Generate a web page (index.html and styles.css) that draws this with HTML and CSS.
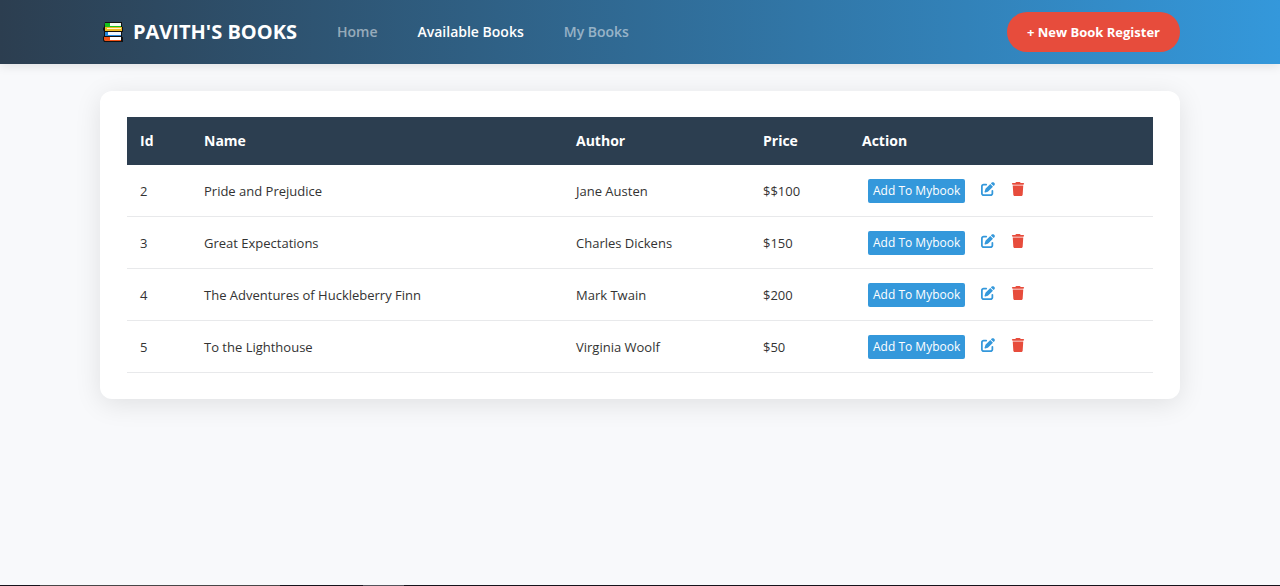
FILE: index.html
```html
<!DOCTYPE html>
<html lang="en">
<head>
<meta charset="utf-8">
<meta name="viewport" content="width=device-width, initial-scale=1">
<title>Pavith's Books</title>
<link rel="stylesheet" href="styles.css">
</head>
<body>
<svg class="sprite" aria-hidden="true">
  <symbol id="edit" viewBox="0 0 512 512"><path d="M471.600 21.700c-21.900-21.900-57.300-21.900-79.200 0L362.300 51.700l97.900 97.900 30.100-30.100c21.900-21.900 21.900-57.300 0-79.200L471.600 21.700zm-299.200 220c-6.100 6.100-10.800 13.600-13.500 21.900l-29.600 88.800c-2.900 8.600-.6 18.100 5.800 24.600s15.900 8.700 24.600 5.800l88.800-29.600c8.200-2.700 15.700-7.400 21.900-13.500L437.700 172.300 339.700 74.300 172.400 241.700zM96 64C43 64 0 107 0 160V416c0 53 43 96 96 96H352c53 0 96-43 96-96V320c0-17.700-14.300-32-32-32s-32 14.300-32 32v96c0 17.700-14.300 32-32 32H96c-17.700 0-32-14.300-32-32V160c0-17.700 14.300-32 32-32h96c17.700 0 32-14.300 32-32s-14.300-32-32-32H96z"/></symbol>
  <symbol id="trash" viewBox="0 0 448 512"><path d="M135.200 17.700L128 32H32C14.300 32 0 46.300 0 64S14.300 96 32 96H416c17.700 0 32-14.300 32-32s-14.300-32-32-32H320l-7.200-14.300C307.400 6.800 296.300 0 284.200 0H163.800c-12.100 0-23.200 6.800-28.600 17.700zM416 128H32L53.200 467c1.600 25.300 22.600 45 47.900 45H346.900c25.300 0 46.300-19.700 47.900-45L416 128z"/></symbol>
</svg>
<header class="topbar">
  <div class="container topbar-inner">
    <a class="brand" href="#">
      <svg class="brand-icon" viewBox="0 0 20 20" aria-hidden="true">
        <path fill="#111" d="M2 0h17v5h1v5h-1v5h1v5H1l-1-2v-3l1-1V9l-1-1V6l1-1z"/>
        <path fill="#15c21c" d="M2 1h16v4H2z"/>
        <path fill="#f5fbf2" d="M7 1h11v3H7z"/>
        <path fill="#edb923" d="M2 5h17v4H2z"/><path fill="#fff3d0" d="M4 6h14v1H4z"/>
        <path fill="#2488dc" d="M2 10h16v4H2z"/><path fill="#f0f7ff" d="M5 10h13v3H5z"/>
        <path fill="#ef5217" d="M1 15h17v4H2l-1-1z"/><path fill="#fff" d="M7 15h11v3H7z"/>
      </svg>
      <span>PAVITH'S BOOKS</span>
    </a>
    <nav class="nav">
      <a class="nav-link" href="#">Home</a>
      <a class="nav-link active" href="#" aria-current="page">Available Books</a>
      <a class="nav-link" href="#">My Books</a>
    </nav>
    <a class="register" href="#">+ New Book Register</a>
  </div>
</header>
<main class="container main">
  <section class="card">
    <table class="books">
      <colgroup><col class="col-id"><col class="col-name"><col class="col-author"><col class="col-price"><col></colgroup>
      <thead><tr><th>Id</th><th>Name</th><th>Author</th><th>Price</th><th>Action</th></tr></thead>
      <tbody>
        <tr><td>2</td><td>Pride and Prejudice</td><td>Jane Austen</td><td>$$100</td><td><div class="actions"><button class="add" type="button">Add To Mybook</button><a class="icon-link edit" href="#" aria-label="Edit"><svg class="icon"><use href="#edit"/></svg></a><a class="icon-link trash" href="#" aria-label="Delete"><svg class="icon"><use href="#trash"/></svg></a></div></td></tr>
        <tr><td>3</td><td>Great Expectations</td><td>Charles Dickens</td><td>$150</td><td><div class="actions"><button class="add" type="button">Add To Mybook</button><a class="icon-link edit" href="#" aria-label="Edit"><svg class="icon"><use href="#edit"/></svg></a><a class="icon-link trash" href="#" aria-label="Delete"><svg class="icon"><use href="#trash"/></svg></a></div></td></tr>
        <tr><td>4</td><td>The Adventures of Huckleberry Finn</td><td>Mark Twain</td><td>$200</td><td><div class="actions"><button class="add" type="button">Add To Mybook</button><a class="icon-link edit" href="#" aria-label="Edit"><svg class="icon"><use href="#edit"/></svg></a><a class="icon-link trash" href="#" aria-label="Delete"><svg class="icon"><use href="#trash"/></svg></a></div></td></tr>
        <tr><td>5</td><td>To the Lighthouse</td><td>Virginia Woolf</td><td>$50</td><td><div class="actions"><button class="add" type="button">Add To Mybook</button><a class="icon-link edit" href="#" aria-label="Edit"><svg class="icon"><use href="#edit"/></svg></a><a class="icon-link trash" href="#" aria-label="Delete"><svg class="icon"><use href="#trash"/></svg></a></div></td></tr>
      </tbody>
    </table>
  </section>
</main>
<div class="bottom-edge"></div>
</body>
</html>
```

FILE: styles.css
```css
* { box-sizing: border-box; }

body {
  margin: 0;
  min-height: 100vh;
  display: flex;
  flex-direction: column;
  background: #f8f9fb;
  color: #333;
  font-family: "Segoe UI", "Open Sans", "Noto Sans", sans-serif;
  font-size: 13px;
  line-height: 20px;
}

a { text-decoration: none; }

.sprite { display: none; }

.container {
  width: 100%;
  max-width: 1128px;
  margin: 0 auto;
  padding: 0 24px;
}

.topbar {
  background: linear-gradient(90deg, #2c3e50, #3498db);
  box-shadow: 0 2px 10px rgba(0, 0, 0, 0.1);
}

.topbar-inner {
  display: flex;
  align-items: center;
  min-height: 64px;
}

.brand {
  display: flex;
  align-items: center;
  gap: 10px;
  margin: 0 40px 0 3px;
  color: #fff;
  font-size: 20px;
  font-weight: 700;
  white-space: nowrap;
}

.brand-icon {
  width: 20px;
  height: 20px;
}

.nav {
  display: flex;
  gap: 40px;
  font-size: 14px;
  font-weight: 600;
  white-space: nowrap;
}

.nav-link { color: rgba(255, 255, 255, 0.5); }
.nav-link.active { color: #fff; }

.register {
  margin-left: auto;
  padding: 10px 20px;
  border-radius: 20px;
  background: #e74c3c;
  color: #fff;
  font-size: 13px;
  font-weight: 700;
  white-space: nowrap;
}

.main {
  flex: 1;
  padding-top: 27px;
  padding-bottom: 27px;
}

.card {
  padding: 26px 27px;
  border-radius: 12px;
  background: #fff;
  box-shadow: 0 5px 27px rgba(0, 0, 0, 0.1);
}

.books {
  width: 100%;
  border-collapse: separate;
  border-spacing: 0;
  table-layout: fixed;
}

.col-id { width: 64px; }
.col-name { width: 372px; }
.col-author { width: 187px; }
.col-price { width: 99px; }

.books th {
  padding: 14px 13px;
  background: #2c3e50;
  color: #fff;
  font-size: 14px;
  font-weight: 700;
  text-align: left;
}

.books td {
  height: 52px;
  padding: 0 13px;
  border-bottom: 1px solid #e8e9eb;
}

.actions {
  display: flex;
  align-items: center;
  padding-left: 6px;
}

.add {
  padding: 2px 5px;
  border: 0;
  border-radius: 2px;
  background: #3498db;
  color: #fff;
  font: inherit;
  font-size: 12px;
  white-space: nowrap;
}

.icon-link {
  display: flex;
  margin-left: 16px;
  padding-bottom: 3px;
}

.icon {
  width: 14px;
  height: 14px;
  fill: currentColor;
}

.edit { color: #3498db; }
.trash { color: #e74c3c; }

.bottom-edge {
  height: 1px;
  background: linear-gradient(90deg, #17121b 40px, #494647 40px 280px, #17121b 280px 363px, #55535b 363px 404px, #17121b 404px);
}
```
